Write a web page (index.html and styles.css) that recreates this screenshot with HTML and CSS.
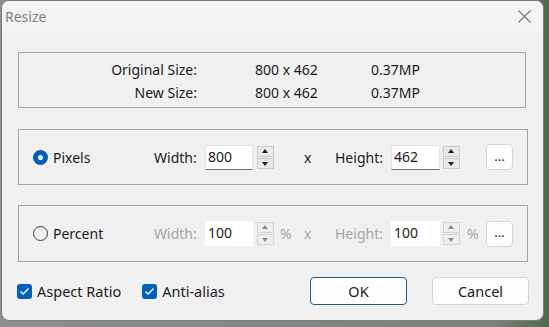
FILE: index.html
```html
<!DOCTYPE html>
<html lang="en">
<head>
  <meta charset="UTF-8" />
  <title>Resize</title>
  <link rel="stylesheet" href="styles.css">
</head>
<body>
  <div class="dialog">
    <div class="title-bar">
      <span class="title">Resize</span>
      <svg class="close" width="13" height="13" viewBox="0 0 13 13">
        <path d="M0.5 0.5 L12.5 12.5 M12.5 0.5 L0.5 12.5" stroke="#7a7a7a" stroke-width="1.2" fill="none"/>
      </svg>
    </div>

    <div class="content">
      <!-- Size info -->
      <div class="box info">
        <div class="info-row">
          <span class="info-label">Original Size:</span>
          <span class="info-dim">800 x 462</span>
          <span class="info-mp">0.37MP</span>
        </div>
        <div class="info-row">
          <span class="info-label">New Size:</span>
          <span class="info-dim">800 x 462</span>
          <span class="info-mp">0.37MP</span>
        </div>
      </div>

      <!-- Pixels -->
      <div class="box group">
        <div class="opt"><span class="radio checked"></span>Pixels</div>
        <span class="lbl w">Width:</span>
        <div class="field active w">800</div>
        <div class="spin"><span class="up"></span><span class="down"></span></div>
        <span class="unit u1"></span>
        <span class="times">x</span>
        <span class="lbl h">Height:</span>
        <div class="field active h">462</div>
        <div class="spin"><span class="up"></span><span class="down"></span></div>
        <span class="unit u2"></span>
        <button class="more">...</button>
      </div>

      <!-- Percent -->
      <div class="box group disabled">
        <div class="opt"><span class="radio"></span>Percent</div>
        <span class="lbl w">Width:</span>
        <div class="field w">100</div>
        <div class="spin"><span class="up"></span><span class="down"></span></div>
        <span class="unit u1">%</span>
        <span class="times">x</span>
        <span class="lbl h">Height:</span>
        <div class="field h">100</div>
        <div class="spin"><span class="up"></span><span class="down"></span></div>
        <span class="unit u2">%</span>
        <button class="more">...</button>
      </div>

      <!-- Footer -->
      <div class="footer">
        <label class="check"><span class="box-check"><svg width="11" height="9" viewBox="0 0 11 9"><path d="M1.5 4.5 L4.2 7 L9.5 1.5" stroke="#fff" stroke-width="1.3" fill="none"/></svg></span>Aspect Ratio</label>
        <label class="check"><span class="box-check"><svg width="11" height="9" viewBox="0 0 11 9"><path d="M1.5 4.5 L4.2 7 L9.5 1.5" stroke="#fff" stroke-width="1.3" fill="none"/></svg></span>Anti-alias</label>
        <button class="btn ok">OK</button>
        <button class="btn cancel">Cancel</button>
      </div>
    </div>
  </div>
</body>
</html>
```

FILE: styles.css
```css
body {
  margin: 0;
  background: linear-gradient(to right, #8c8f8c, #7c817c 90%, #4f6a4a);
  font-family: 'Noto Sans', sans-serif;
  font-size: 14px;
  color: #1b1b1b;
  width: 549px;
  height: 327px;
  overflow: hidden;
}
.dialog {
  margin: 0 0 0 1px;
  width: 541px;
  height: 319px;
  border: 1px solid #7d7d7d;
  border-radius: 8px;
  background: #f0f0f0;
  overflow: hidden;
}
.title-bar {
  height: 31px;
  background: #f3f3f3;
  display: flex;
  align-items: center;
  justify-content: space-between;
  padding: 0 12px 0 3px;
}
.title {
  font-size: 14px;
  color: #7f7f7f;
  margin-top: -1px;
}
.close {
  margin-top: -1px;
}
.content {
  padding: 20px 14px 0 16px;
}
.box {
  width: 508px;
  border: 1px solid #a5a5a5;
}
.info {
  padding-top: 5px;
  box-sizing: border-box;
  height: 56px;
}
.info-row {
  display: flex;
  height: 23px;
  align-items: center;
}
.info-label {
  width: 178px;
  text-align: right;
}
.info-dim {
  margin-left: 58px;
  width: 116px;
}
.group {
  margin-top: 21px;
  display: flex;
  align-items: center;
  padding-left: 14px;
  box-sizing: border-box;
  width: 510px;
  height: 56px;
}
.group.disabled {
  margin-top: 20px;
  height: 57px;
}
.opt {
  width: 121px;
  display: flex;
  align-items: center;
}
.radio {
  width: 13px;
  height: 13px;
  border: 1px solid #3b3b3b;
  border-radius: 50%;
  margin-right: 5px;
  box-sizing: content-box;
}
.radio.checked {
  width: 5px;
  height: 5px;
  border: 5px solid #005fb8;
  background: #fff;
}
.lbl.w { width: 51px; }
.lbl.h { width: 56px; }
.field {
  height: 25px;
  background: #fff;
  box-sizing: border-box;
  padding: 2px 0 0 3px;
  line-height: 20px;
}
.field.w { width: 48px; margin-right: 4px; }
.field.h { width: 49px; margin-right: 3px; }
.field.active {
  border: 1px solid #e3e3e3;
  border-bottom: 1px solid #6e6e6e;
  padding: 1px 0 0 2px;
}
.spin {
  width: 17px;
  display: flex;
  flex-direction: column;
  gap: 1px;
}
.spin span {
  height: 11px;
  background: #e9e9e9;
  border: 1px solid #c9c9c9;
  box-sizing: border-box;
  position: relative;
}
.spin span::after {
  content: '';
  position: absolute;
  left: 4px;
  top: 2px;
  border-left: 3.5px solid transparent;
  border-right: 3.5px solid transparent;
}
.spin .up::after { border-bottom: 4px solid #1b1b1b; }
.spin .down::after { border-top: 4px solid #1b1b1b; top: 3px; }
.unit.u1 { width: 30px; padding-left: 6px; box-sizing: border-box; }
.unit.u2 { width: 26px; padding-left: 7px; box-sizing: border-box; }
.times { width: 31px; }
.more {
  width: 27px;
  height: 26px;
  border: 1px solid #d6d6d6;
  border-radius: 4px;
  background: #fdfdfd;
  font-family: inherit;
  font-size: 13px;
  padding: 0 0 3px;
  color: #1b1b1b;
}
.disabled .lbl,
.disabled .unit,
.disabled .times {
  color: #a6a6a6;
}
.disabled .spin .up::after { border-bottom-color: #8a8a8a; }
.disabled .spin .down::after { border-top-color: #8a8a8a; }
.disabled .spin span { background: #efefef; border-color: #d4d4d4; }
.footer {
  display: flex;
  align-items: center;
  margin-top: 15px;
}
.check {
  display: flex;
  align-items: center;
  margin-right: 22px;
  font-size: 14.5px;
}
.check + .check {
  margin-right: 0;
}
.box-check {
  width: 15px;
  height: 15px;
  margin-left: -1px;
  margin-right: 5px;
  border-radius: 3px;
  background: #005fb8;
  display: flex;
  align-items: center;
  justify-content: center;
}
.btn {
  width: 97px;
  height: 28px;
  border-radius: 4px;
  background: #fdfdfd;
  font-family: inherit;
  font-size: 14.5px;
  color: #1b1b1b;
}
.ok {
  margin-left: auto;
  border: 1px solid #1f5d8c;
}
.cancel {
  margin-left: 25px;
  border: 1px solid #d3d3d3;
}
```
